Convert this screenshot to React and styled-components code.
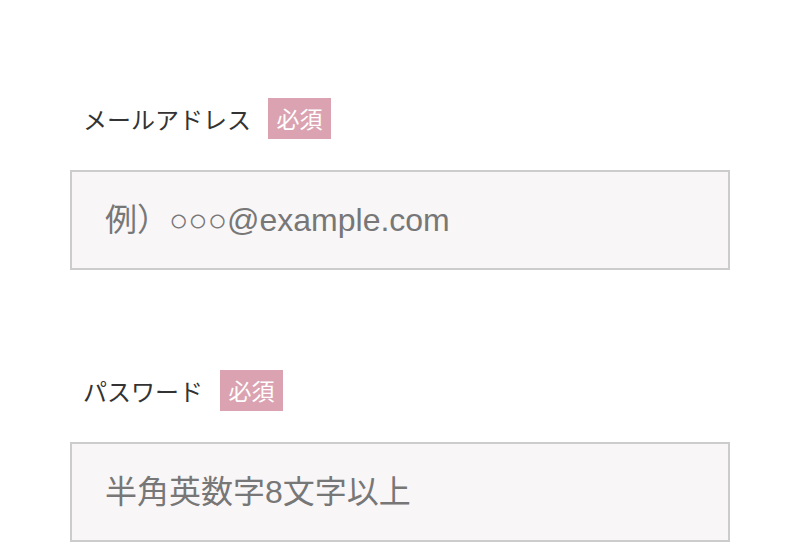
import React from "react";
import styled, { createGlobalStyle } from "styled-components";

const GlobalStyle = createGlobalStyle`
  body {
    margin: 0;
    background: #fff;
    font-family: "Liberation Sans", Arial, "Noto Sans CJK JP", sans-serif;
  }
`;

const Form = styled.form`
  width: 660px;
  padding: 98px 70px 0;
  display: flex;
  flex-direction: column;
  gap: 100px;
`;

const Field = styled.div`
  display: flex;
  flex-direction: column;
  gap: 31px;
`;

const LabelRow = styled.label`
  display: flex;
  align-items: center;
  gap: 17px;
  padding-left: 13px;
  height: 41px;
  font-family: "Noto Sans CJK JP", sans-serif;
  font-size: 24px;
  line-height: 1;
  color: #333;
`;

const Badge = styled.span`
  display: flex;
  align-items: center;
  justify-content: center;
  width: 63px;
  height: 41px;
  background: #dba3b1;
  color: #fff;
  font-size: 23px;
`;

const Input = styled.input`
  box-sizing: border-box;
  width: 660px;
  height: 100px;
  border: 2px solid #cccccc;
  background: #f9f6f7;
  padding: 0 33px;
  font-family: "Liberation Sans", Arial, "Noto Sans CJK JP", sans-serif;
  font-size: 32px;
  color: #333;
  outline: none;
  &::placeholder {
    color: #777;
  }
`;

export default function App() {
  return (
    <>
      <GlobalStyle />
      <Form>
        <Field>
          <LabelRow>
            メールアドレス
            <Badge>必須</Badge>
          </LabelRow>
          <Input type="email" placeholder="例）○○○@example.com" />
        </Field>
        <Field>
          <LabelRow>
            パスワード
            <Badge>必須</Badge>
          </LabelRow>
          <Input type="password" placeholder="半角英数字8文字以上" />
        </Field>
      </Form>
    </>
  );
}
